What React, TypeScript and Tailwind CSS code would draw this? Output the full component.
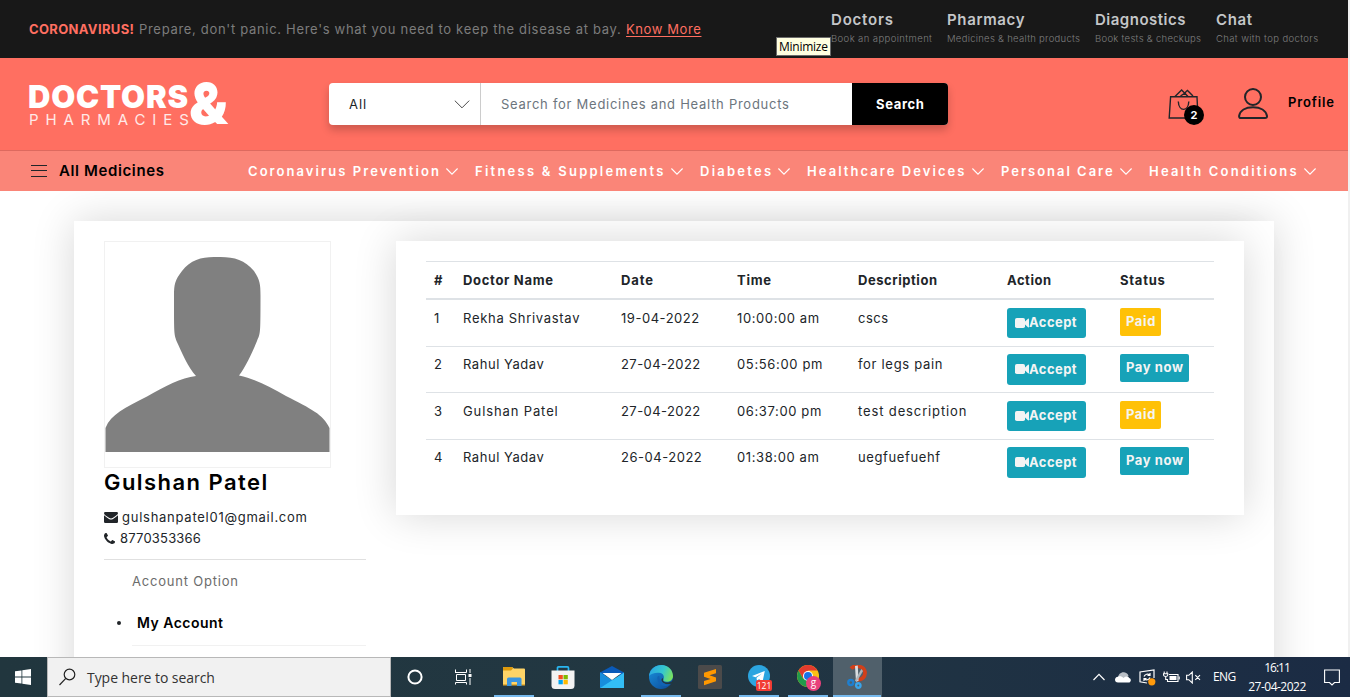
import React from "react";

const SEGOE = "font-['Open_Sans','Noto_Sans',sans-serif]";

function Chevron({ className, color = "#fff", width = 1.1 }: { className: string; color?: string; width?: number }) {
  return (
    <svg className={className} viewBox="0 0 12 7" fill="none" stroke={color} strokeWidth={width}>
      <path d="M0.4 0.5 L6 6.1 L11.6 0.5" />
    </svg>
  );
}

const services = [
  { title: "Doctors", sub: "Book an appointment", w: "w-[116px]", tt: "tracking-[0.8px]", ts: "tracking-[0.4px]" },
  { title: "Pharmacy", sub: "Medicines & health products", w: "w-[148px]", tt: "tracking-[0.65px]", ts: "tracking-[0.285px]" },
  { title: "Diagnostics", sub: "Book tests & checkups", w: "w-[121px]", tt: "tracking-[0.5px]", ts: "tracking-[0.29px]" },
  { title: "Chat", sub: "Chat with top doctors", w: "w-[132px]", tt: "tracking-[0.6px]", ts: "tracking-[0.38px]" },
];

function TopBar() {
  return (
    <div className="flex h-[58px] bg-[#181818] pl-[29px]">
      <p className="w-[802px] pt-[19px] text-[13px] leading-[20px] whitespace-nowrap text-[#7c7c7c]">
        <span className="inline-block w-[110px] font-bold tracking-[0.35px] text-[#ff6f61]">CORONAVIRUS!</span>
        <span className="inline-block w-[487px] tracking-[0.69px]">
          Prepare, don't panic. Here's what you need to keep the disease at bay.
        </span>
        <a className="tracking-[0.6px] text-[#ff6f61] underline underline-offset-2">Know More</a>
      </p>
      {services.map((s) => (
        <div key={s.title} className={`${s.w} shrink-0 pt-[10px] whitespace-nowrap`}>
          <div className={`text-[15px] leading-[20px] font-semibold text-[#c4c6c8] ${s.tt}`}>{s.title}</div>
          <div className={`mt-[3px] text-[9.5px] leading-[12px] font-light text-[#7f7f7f] ${s.ts}`}>{s.sub}</div>
        </div>
      ))}
    </div>
  );
}

function Logo() {
  return (
    <div className="flex w-[300px] text-white">
      <div className="w-[161px] pt-[23px]">
        <div className="-ml-[1px] text-[31px] leading-[31px] font-black tracking-[0.8px] whitespace-nowrap">DOCTORS</div>
        <div className="text-[15px] leading-[15px] tracking-[6.9px] whitespace-nowrap text-[#ffe9e7]">PHARMACIES</div>
      </div>
      <div className="-ml-px pt-[22px] text-[56px] leading-[48px] font-black">&amp;</div>
    </div>
  );
}

function Header() {
  return (
    <header className="flex h-[92px] bg-[#ff6f61] pl-[29px]">
      <Logo />
      <div className="mt-[25px] flex h-[42px] w-[619px] rounded bg-white text-[13px] leading-[42px] shadow-[0_5px_8px_rgba(0,0,0,0.2)]">
        <div className="flex w-[152px] items-center justify-between border-r border-[#ccc] pr-[10px] pl-[20px] text-[#212529]">
          <span className="tracking-[1px]">All</span>
          <Chevron className="h-[9px] w-[16px]" color="#444" width={0.75} />
        </div>
        <div className="w-[371px] pl-[20px] tracking-[0.73px] text-[#6c757d]">Search for Medicines and Health Products</div>
        <div className="w-[96px] rounded-r bg-black pl-[24px] font-bold tracking-[0.65px] text-white">Search</div>
      </div>
      <div className="relative mt-[31px] ml-[220px] h-[40px] w-[38px]">
        <svg className="h-[31px] w-[31px]" viewBox="0 0 31 31" fill="none" stroke="#212529" strokeWidth="1.4">
          <path d="M2.6 7.7 H29 L30 29 H1.2 Z" />
          <path d="M7 7.5 L13.6 1 L20 7.5 M12.5 7 L18 3.4 M17.5 3 L19.5 1.4 L25 7" />
          <path d="M10.3 12.5 C10.8 23 20.3 23 20.8 12.5" />
        </svg>
        <div className="absolute top-[16px] left-[16px] h-[20px] w-[20px] rounded-full bg-black text-center text-[11px] leading-[20px] font-bold text-white">2</div>
      </div>
      <svg className="mt-[30px] ml-[32px] h-[32px] w-[31px]" viewBox="0 0 31 32" fill="none" stroke="#212529" strokeWidth="2">
        <circle cx="15" cy="9" r="8" />
        <path d="M3 30 C1.6 30 1 29.3 1.1 28 C2 22.5 7.5 19.2 15 19.2 C22.5 19.2 28 22.5 29 28 C29.1 29.3 28.5 30 27 30 Z" />
      </svg>
      <div className="mt-[34px] ml-[19px] text-[13px] leading-[20px] font-semibold tracking-[0.85px] text-black">Profile</div>
    </header>
  );
}

const menu = [
  { t: "Coronavirus Prevention", c: "w-[227px]", k: "tracking-[2.06px]" },
  { t: "Fitness & Supplements", c: "w-[225px]", k: "tracking-[2.25px]" },
  { t: "Diabetes", c: "w-[107px]", k: "tracking-[2.25px]" },
  { t: "Healthcare Devices", c: "w-[194px]", k: "tracking-[2.06px]" },
  { t: "Personal Care", c: "w-[148px]", k: "tracking-[1.98px]" },
  { t: "Health Conditions", c: "w-[190px]", k: "tracking-[2.2px]" },
];

function Nav() {
  return (
    <nav className="flex h-[41px] items-center border-t border-[#dd6a5f] bg-[#fa8578] pl-[31px]">
      <div className="flex w-[217px] items-center gap-[12px]">
        <svg className="h-[12px] w-[16px]" viewBox="0 0 16 12" stroke="#212529" strokeWidth="1">
          <path d="M0 0.5 H16 M0 5.5 H16 M0 11.5 H16" />
        </svg>
        <span className="text-[15px] leading-[20px] font-semibold tracking-[0.62px] text-black">All Medicines</span>
      </div>
      {menu.map((m) => (
        <div key={m.t} className={`flex shrink-0 items-center gap-[5px] text-white ${m.c}`}>
          <span className={`text-[13px] leading-[20px] font-semibold whitespace-nowrap ${m.k}`}>{m.t}</span>
          <Chevron className="h-[7px] w-[12px]" />
        </div>
      ))}
    </nav>
  );
}

function Sidebar() {
  return (
    <aside className="w-[262px] text-[#212529]">
      <div className="h-[227px] w-[227px] border border-[#f1f1f1] bg-white">
        <svg className="block h-[225px] w-[225px]" viewBox="0 0 225 225" fill="#808080">
          <path d="M112 15 C128 14.5 139 17 149 29 C155 38 155.5 42 155.5 54 C155.5 92 155.5 91 152 99 C147 111 141 124 134 133.5 C150 137 164 144 181 154 C206 167 218 172 224.500 186 V210 H0.500 V186 C6 172 20 166 42 154.500 C60 144 76 136 91 134 C83 125 77 111 71.500 99 C69 91 69 92 69 54 C69 42 70 38 77 29 C86 17 98 14.500 112 15 Z" />
        </svg>
      </div>
      <h2 className="text-[22px] leading-[28px] font-semibold tracking-[1.45px] text-black">Gulshan Patel</h2>
      <div className="mt-[11px] flex h-[21px] items-center text-[13px] leading-[21px]">
        <svg className="mr-[4px] h-[11px] w-[14px]" viewBox="0 0 14 11" fill="#212529">
          <path d="M0 1.300 Q0 0 1.300 0 H12.700 Q14 0 14 1.300 C13.800 2.500 12.500 3.500 9 5.800 Q7 7.200 5 5.800 C1.500 3.500 0.200 2.600 0 1.300 Z" />
          <path d="M0 3.200 C1.500 4.600 3.500 5.700 5 6.900 Q7 8.300 9 6.900 C10.500 5.700 12.500 4.600 14 3.200 V9.700 Q14 11 12.700 11 H1.300 Q0 11 0 9.700 Z" />
        </svg>
        <span className="tracking-[0.74px]">gulshanpatel01@gmail.com</span>
      </div>
      <div className="flex h-[21px] items-center text-[13px] leading-[21px]">
        <svg className="mr-[5px] mb-px h-[11px] w-[11px]" viewBox="0 0 1408 1408" fill="#212529">
          <path d="M1408 1112q0 27-10 70.500t-21 68.500q-21 50-122 106-94 51-186 51-27 0-53-3.500t-57.500-12.500-47-14.500-55.500-20.500-49-18q-98-35-175-83-127-79-264-216t-216-264q-48-77-83-175-3-9-18-49t-20.500-55.500-14.500-47-12.500-57.500-3.500-53q0-92 51-186 56-101 106-122 25-11 68.500-21t70.500-10q14 0 21 3 18 6 53 76 11 19 30 54t35 63.500 31 53.500q3 4 17.500 25t21.500 35.500 7 28.500q0 20-28.500 50t-62 55-62 53-28.500 46q0 9 5 22.500t8.500 20.500 14 24 11.500 19q76 137 174 235t235 174q2 1 19 11.500t24 14 20.500 8.500 22.500 5q18 0 46-28.500t53-62 55-62 50-28.500q14 0 28.500 7t35.500 21.500 25 17.500q25 15 53.500 31t63.500 35 54 30q70 35 76 53 3 7 3 21z" />
        </svg>
        <span className="tracking-[0.2px]">8770353366</span>
      </div>
      <div className="mt-[10px] border-t border-[#e0e0e0]" />
      <div className="mt-[11px] ml-[28px] text-[13px] leading-[20px] tracking-[0.79px] text-[#6c6c6c]">Account Option</div>
      <div className="mt-[22px] flex h-[20px] items-center">
        <span className="mr-[16px] ml-[13px] h-[4px] w-[4px] rounded-full bg-[#212529]" />
        <span className="text-[14px] leading-[20px] font-semibold tracking-[0.48px] text-black">My Account</span>
      </div>
      <div className="mt-[12px] ml-[28px] border-t border-[#f1f1f1]" />
    </aside>
  );
}

const columns = [
  { t: "#", w: "w-[29px]", k: "" },
  { t: "Doctor Name", w: "w-[158px]", k: "tracking-[0.69px]" },
  { t: "Date", w: "w-[116px]", k: "tracking-[0.89px]" },
  { t: "Time", w: "w-[121px]", k: "tracking-[0.73px]" },
  { t: "Description", w: "w-[149px]", k: "tracking-[0.55px]" },
  { t: "Action", w: "w-[113px]", k: "tracking-[0.52px]" },
  { t: "Status", w: "w-[102px]", k: "tracking-[0.75px]" },
];

type Cell = [string, string];
const rows: { cells: Cell[]; paid: boolean; line: string; button: string }[] = [
  {
    cells: [["1", ""], ["Rekha Shrivastav", "tracking-[0.7px]"], ["19-04-2022", "tracking-[0.53px]"], ["10:00:00 am", "tracking-[0.6px]"], ["cscs", "tracking-[0.47px]"]],
    paid: true,
    line: "h-[46px] pt-[8px]",
    button: "h-[30px]",
  },
  {
    cells: [["2", ""], ["Rahul Yadav", "tracking-[0.54px]"], ["27-04-2022", "tracking-[0.43px]"], ["05:56:00 pm", "tracking-[0.64px]"], ["for legs pain", "tracking-[0.69px]"]],
    paid: false,
    line: "h-[46px] border-t border-[#dee2e6] pt-[7px]",
    button: "h-[31px]",
  },
  {
    cells: [["3", ""], ["Gulshan Patel", "tracking-[0.88px]"], ["27-04-2022", "tracking-[0.43px]"], ["06:37:00 pm", "tracking-[0.62px]"], ["test description", "tracking-[0.87px]"]],
    paid: true,
    line: "h-[47px] border-t border-[#dee2e6] pt-[8px]",
    button: "h-[30px]",
  },
  {
    cells: [["4", ""], ["Rahul Yadav", "tracking-[0.54px]"], ["26-04-2022", "tracking-[0.52px]"], ["01:38:00 am", "tracking-[0.6px]"], ["uegfuefuehf", "tracking-[0.61px]"]],
    paid: false,
    line: "h-[46px] border-t border-[#dee2e6] pt-[7px]",
    button: "h-[31px]",
  },
];

function Appointments() {
  return (
    <section className="h-[274px] w-[848px] bg-white px-[30px] pt-[20px] shadow-[0_0_40px_rgba(0,0,0,0.16)]">
      <table className="w-[788px] table-fixed border-separate border-spacing-0 text-left text-[13px] leading-[21px] text-[#212529]">
        <thead>
          <tr>
            {columns.map((c) => (
              <th key={c.t} className={`h-[39px] border-t border-b-2 border-[#dee2e6] px-[8px] align-middle font-bold ${c.w} ${c.k}`}>
                {c.t}
              </th>
            ))}
          </tr>
        </thead>
        <tbody>
          {rows.map((r, i) => (
            <tr key={i}>
              {r.cells.map(([t, k], j) => (
                <td key={j} className={`px-[8px] align-top whitespace-nowrap ${r.line} ${k}`}>{t}</td>
              ))}
              <td className={`px-[8px] align-top ${r.line}`}>
                <div className={`flex w-[79px] items-center rounded-[3px] bg-[#17a2b8] pb-px pl-[8px] font-bold text-[#f4f4f4] ${r.button}`}>
                  <svg className="h-[10px] w-[14px]" viewBox="0 0 14 10" fill="#f4f4f4">
                    <rect x="0" y="0" width="10" height="10" rx="1.8" />
                    <path d="M9.500 4 L13 0.800 Q14 0.300 14 1.200 V8.800 Q14 9.700 13 9.200 L9.500 6 Z" />
                  </svg>
                  <span className="tracking-[0.42px]">Accept</span>
                </div>
              </td>
              <td className={`px-[8px] align-top ${r.line}`}>
                <span
                  className={`block h-[28px] rounded-[2px] pl-[6px] leading-[27px] font-bold text-[#f4f4f4] ${
                    r.paid ? "w-[41px] bg-[#ffc107] tracking-[0.6px]" : "w-[69px] bg-[#17a2b8] tracking-[0.59px]"
                  }`}
                >
                  {r.paid ? "Paid" : "Pay now"}
                </span>
              </td>
            </tr>
          ))}
        </tbody>
      </table>
    </section>
  );
}

function TaskIcon({ children, running = false, active = false }: { children: React.ReactNode; running?: boolean; active?: boolean }) {
  return (
    <div className={`flex h-[40px] w-[49px] flex-col items-center ${active ? "bg-[#50606b]" : ""}`}>
      <div className="flex h-[38px] items-center pt-[2px]">{children}</div>
      <div className={`h-[2px] ${active ? "w-[48px]" : "w-[40px]"} ${running ? "bg-[#76b9ed]" : ""}`} />
    </div>
  );
}

function Taskbar() {
  return (
    <footer className={`${SEGOE} flex h-[40px] w-[1350px] shrink-0 bg-linear-to-r from-[#21363e] via-[#223742] to-[#1b2b44] text-white`}>
      <div className="flex w-[47px] items-center justify-center pr-px">
        <svg className="h-[16px] w-[16px]" viewBox="0 0 16 16" fill="#fff">
          <path d="M0 2.300 L6.500 1.400 V7.600 H0 Z M7.300 1.300 L16 0 V7.600 H7.300 Z M0 8.400 H6.500 V14.600 L0 13.700 Z M7.300 8.400 H16 V16 L7.300 14.700 Z" />
        </svg>
      </div>
      <div className="flex w-[344px] items-center border border-[#b8b8b8] bg-[#f1f1f1] pl-[11px] text-[#333]">
        <svg className="h-[18px] w-[17px]" viewBox="0 0 17 18" fill="none" stroke="#222" strokeWidth="1.2">
          <circle cx="10.5" cy="6.500" r="5.3" />
          <path d="M6.800 10.300 L0.500 17" />
        </svg>
        <span className="ml-[11px] text-[14px] tracking-[-0.05px] whitespace-nowrap">Type here to search</span>
      </div>
      <div className="flex w-[48px] items-center justify-center">
        <svg className="h-[16px] w-[16px]" viewBox="0 0 16 16" fill="none" stroke="#fff" strokeWidth="2">
          <circle cx="8" cy="8" r="6.6" />
        </svg>
      </div>
      <div className="flex w-[50.5px] items-center justify-center pr-[2.5px]">
        <svg className="h-[16px] w-[17px]" viewBox="0 0 17 16" fill="none" stroke="#fff" strokeWidth="1">
          <path d="M0.500 0.500 V3.500 M0 3.500 H11.500 M11.500 0.500 V3.500 M1.500 5.500 H10.500 V11.500 H1.500 Z M0.500 15.500 V13.500 H11.500 V15.500 M15 0 V4 M15 9 V16" />
          <rect x="13.500" y="5" width="3" height="3" fill="#fff" stroke="none" />
        </svg>
      </div>
      <TaskIcon running>
        <svg className="h-[20px] w-[22px]" viewBox="0 0 22 20">
          <path d="M0 1 Q0 0 1 0 H9 L11 1.500 H21 Q22 1.500 22 2.500 V18 H0 Z" fill="#ffd467" />
          <path d="M0 1 Q0 0 1 0 H9 L10 1.500 L8 3.500 H0 Z" fill="#dd9a0c" />
          <path d="M0 17 H22 V18.500 H0 Z" fill="#e8ae33" />
          <path d="M4 19 V12 Q4 10.500 5.500 10.500 H17 Q18.500 10.500 18.500 12 V19 H14 V15 H8.500 V19 Z" fill="#3b95e0" />
        </svg>
      </TaskIcon>
      <TaskIcon>
        <svg className="h-[23px] w-[24px]" viewBox="0 0 24 23">
          <path d="M6.500 5 V2 Q6.500 0.900 7.600 0.900 H16.400 Q17.500 0.900 17.500 2 V5" fill="none" stroke="#29b6f0" strokeWidth="1.7" />
          <path d="M0.500 4.500 H23.500 V19.500 Q23.500 23 20 23 H4 Q0.500 23 0.500 19.500 Z" fill="#f3f3f3" />
          <rect x="7.500" y="9" width="4.3" height="4.3" fill="#f25022" />
          <rect x="12.500" y="9" width="4.3" height="4.3" fill="#7fba00" />
          <rect x="7.500" y="14" width="4.3" height="4.3" fill="#00a4ef" />
          <rect x="12.500" y="14" width="4.3" height="4.3" fill="#ffb900" />
        </svg>
      </TaskIcon>
      <TaskIcon>
        <svg className="h-[22px] w-[24px]" viewBox="0 0 24 22">
          <path d="M0 6.500 L12 0 L24 6.500 V9 H0 Z" fill="#0a5ab8" />
          <path d="M0 6.500 L24 22 H0 Z" fill="#1fa2ea" />
          <path d="M0 22 L24 6.500 V22 Z" fill="#33bdf5" />
          <path d="M0 6.500 L12 14.300 L0 22 Z" fill="#178ddc" />
          <path d="M2.500 7 H21.500 L12 14 Z" fill="#fff" />
        </svg>
      </TaskIcon>
      <TaskIcon running>
        <svg className="h-[24px] w-[24px]" viewBox="0 0 24 24">
          <defs>
            <linearGradient id="edgeTop" x1="0" y1="0.3" x2="1" y2="0.6">
              <stop offset="0" stopColor="#2ba6e3" />
              <stop offset="0.55" stopColor="#35c7cf" />
              <stop offset="1" stopColor="#7be25c" />
            </linearGradient>
            <linearGradient id="edgeLow" x1="0" y1="0" x2="0.8" y2="1">
              <stop offset="0" stopColor="#1b94df" />
              <stop offset="1" stopColor="#0c4f9e" />
            </linearGradient>
          </defs>
          <circle cx="12" cy="12" r="12" fill="url(#edgeLow)" />
          <path d="M0 11 C1 3.500 7 0 12.500 0 C19.500 0 24 5.500 24 11 C24 15 21 16.800 17.800 16.800 C15 16.800 13.500 15.500 14.300 14.300 C15.800 12.200 14.500 8 10 7.800 C5.500 7.500 1.500 9 0 11 Z" fill="url(#edgeTop)" />
          <path d="M14.300 14.300 C13 16.500 17 18 20 17.300 C22 17 23.500 16 24.500 14.500 L24.500 17 L22.200 18.800 C18 20 13 18.500 12.500 15 C12.500 14 13 13.500 13.800 13 Z" fill="#223741" />
          <path d="M8.500 12 C7.500 16.500 11.500 21.500 17 21 C19 20.800 20.500 20 21.800 18.800 C17 20.500 10.500 18 10.300 11 C9.500 11 8.800 11.300 8.500 12 Z" fill="#1263b4" />
        </svg>
      </TaskIcon>
      <TaskIcon>
        <svg className="h-[24px] w-[24px]" viewBox="0 0 24 24">
          <rect width="24" height="24" rx="1.5" fill="#4b4a4a" />
          <path d="M6 7.800 L18 4 V8.200 L11.500 10.300 L18 12.400 V16.300 L6 20.200 V16 L12.500 13.900 L6 11.800 Z" fill="#ff9800" />
        </svg>
      </TaskIcon>
      <TaskIcon running>
        <div className="relative h-[24px] w-[24px]">
          <svg className="ml-px h-[22px] w-[22px]" viewBox="0 0 22 22">
            <circle cx="11" cy="11" r="11" fill="#2ca5e0" />
            <path d="M4 11 L16.800 6 L14.500 17 L11 14 L9 16 L8.500 12.700 L14 8.500 L7.500 12.200 Z" fill="#fff" />
          </svg>
          <div className="absolute top-[15px] left-[9px] h-[11px] w-[16px] rounded-[2px] bg-[#f23c34] text-center text-[8.5px] leading-[11px]">121</div>
        </div>
      </TaskIcon>
      <TaskIcon running>
        <div className="relative h-[24px] w-[24px]">
          <svg className="ml-px h-[22px] w-[22px]" viewBox="0 0 22 22">
            <circle cx="11" cy="11" r="11" fill="#fbc116" />
            <path d="M1.500 5.500 A11 11 0 0 1 20.500 5.500 H11 L6.200 13.700 Z" fill="#e33b2e" />
            <path d="M1.500 5.500 A11 11 0 0 0 11 22 L15.800 13.700 H6.200 Z" fill="#229a4b" />
            <circle cx="11" cy="11" r="5" fill="#fff" />
            <circle cx="11" cy="11" r="4" fill="#1a73e8" />
          </svg>
          <div className="absolute top-[11px] left-[10px] h-[15px] w-[15px] rounded-full bg-[#e8407c] text-center text-[10px] leading-[13px]">g</div>
        </div>
      </TaskIcon>
      <TaskIcon running active>
        <svg className="h-[24px] w-[20px]" viewBox="0 0 20 24" fill="none">
          <path d="M4 3.500 C8 -0.500 17 1 18 7 C18.500 12 14.500 15.500 9.500 14.500" stroke="#d1401a" strokeWidth="3.8" />
          <path d="M8 1 L10.800 0.500 L11.500 16 L9 16.500 Z" fill="#d9dde0" />
          <path d="M16 6 L14.300 4 L8 15.500 L9.500 17 Z" fill="#aeb5ba" />
          <circle cx="3.800" cy="17.500" r="2.500" stroke="#1e7fd0" strokeWidth="2.400" />
          <circle cx="11.300" cy="20.500" r="2.200" stroke="#39a4ea" strokeWidth="2.400" />
        </svg>
      </TaskIcon>
      <div className="ml-auto flex items-center pr-[10px]">
        <svg className="h-[8px] w-[12px]" viewBox="0 0 12 8" fill="none" stroke="#fff" strokeWidth="1.2">
          <path d="M0.500 7 L6 1.300 L11.500 7" />
        </svg>
        <svg className="ml-[10px] h-[11px] w-[16px]" viewBox="0 0 16 11">
          <path d="M3 6 C3 2.500 6 0 9 0.300 C11.500 0.500 13 2 13.500 4 L6 8 Z" fill="#b9bfc6" />
          <path d="M3 10.500 C-1 10.500 -1 5 3 4.700 C5 3.800 7 4.500 8.500 6 C11 4 13.500 4.300 14 6 C16.500 6.200 16.500 10.500 13.500 10.500 Z" fill="#fff" />
        </svg>
        <svg className="ml-[8px] h-[17px] w-[17px]" viewBox="0 0 17 17" fill="none" stroke="#fff" strokeWidth="1.2">
          <path d="M8 14 L1 12.800 V3 L15 1 V9" />
          <path d="M5 7.500 C6 5 9 4.500 10.500 6 M11 4 V6.500 H8.500 M11 8.500 C10 11 7 11.500 5.500 10 M5 12 V9.500 H7.500" />
          <circle cx="12.800" cy="12.800" r="3.600" fill="#ff9a0c" stroke="none" />
        </svg>
        <svg className="ml-[7px] h-[13px] w-[17px]" viewBox="0 0 17 13" fill="none" stroke="#fff" strokeWidth="1.1">
          <path d="M6 3.500 H15 V10.500 H4.500 V8" />
          <rect x="6.500" y="5" width="7" height="4" fill="#fff" stroke="none" />
          <path d="M16.200 5.500 V8.500 M1.200 0.500 V2.500 M4 0.500 V2.500 M0.500 2.800 H4.800 V4 Q4.500 5.500 2.700 5.500 Q0.800 5.500 0.500 4 Z M2.700 5.500 V8.500 H4.500" />
        </svg>
        <svg className="ml-[6px] h-[13px] w-[15px]" viewBox="0 0 15 13" fill="none" stroke="#fff" strokeWidth="1.1">
          <path d="M0.600 4.300 H2.800 L6.300 1 V12 L2.800 8.700 H0.600 Z M9.300 4.200 L14 8.900 M14 4.200 L9.300 8.900" />
        </svg>
        <span className="ml-[12px] w-[35px] text-[12px] tracking-[-0.6px]">ENG</span>
        <div className="w-[58px] text-center text-[12px] leading-[18px] whitespace-nowrap">
          <div className="pb-px tracking-[-1px]">16:11</div>
          <div className="tracking-[-0.5px]">27-04-2022</div>
        </div>
        <svg className="ml-[18px] h-[17px] w-[16px]" viewBox="0 0 16 17" fill="none" stroke="#fff" strokeWidth="1.1">
          <path d="M0.600 1 H15.400 V13.500 H10.500 L8 16 L5.500 13.500 H0.600 Z" />
        </svg>
      </div>
    </footer>
  );
}

export default function App() {
  return (
    <div className="relative flex h-[697px] w-[1350px] flex-col overflow-hidden bg-white font-['Inter',sans-serif]">
      <div className="flex min-h-0 flex-1">
        <div className="flex w-[1348px] flex-col overflow-hidden">
          <TopBar />
          <Header />
          <Nav />
          <main className="flex-1 overflow-hidden pt-[30px] pl-[74px]">
            <div className="flex h-[600px] w-[1200px] items-start gap-[30px] bg-white pt-[20px] pl-[30px] shadow-[0_0_40px_rgba(0,0,0,0.16)]">
              <Sidebar />
              <Appointments />
            </div>
          </main>
        </div>
        <div className="w-[2px] bg-[#f0f0f0]" />
      </div>
      <Taskbar />
      <div
        className={`${SEGOE} absolute top-[37px] left-[776px] h-[19px] w-[55px] border border-[#6b6b6b] bg-[#ffffe1] pl-[2px] text-[12px] leading-[17px] tracking-[-0.25px] whitespace-nowrap text-black`}
      >
        Minimize
      </div>
    </div>
  );
}
